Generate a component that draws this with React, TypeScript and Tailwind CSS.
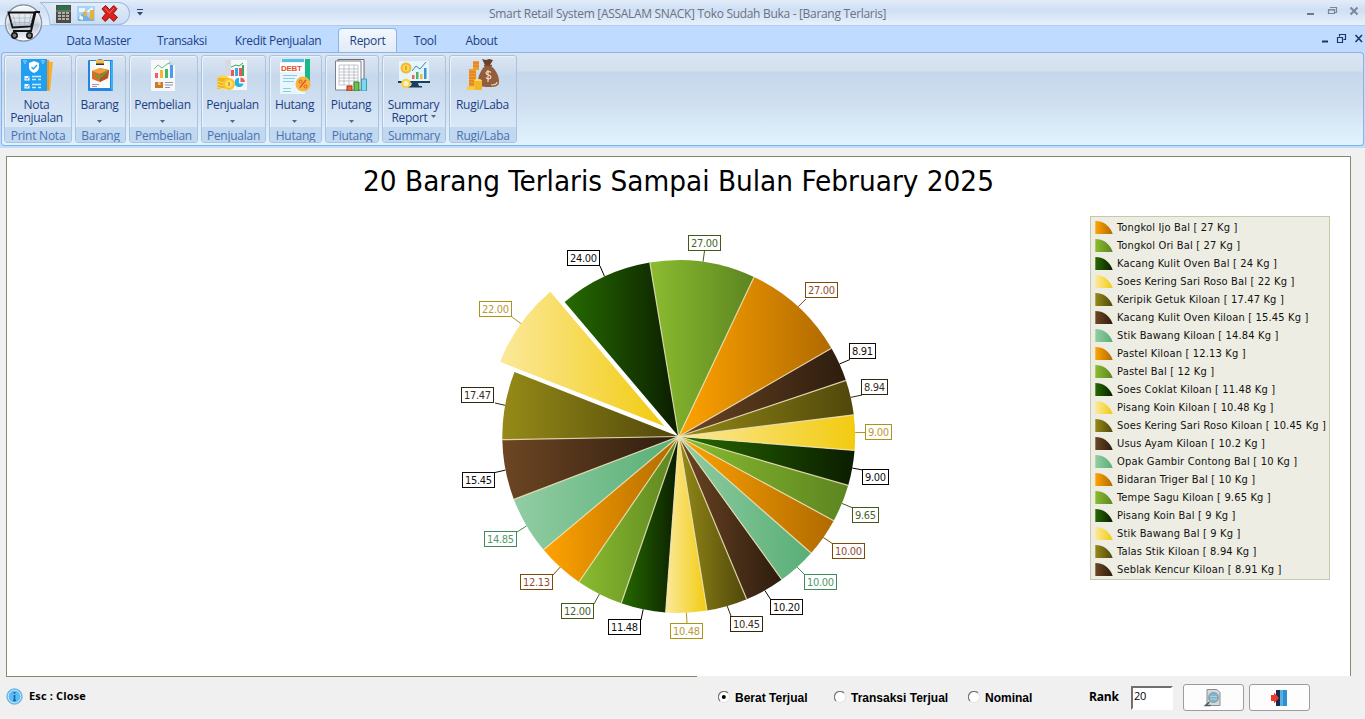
import React from "react";

type Hue = "orange" | "green" | "forest" | "yellow" | "olive" | "brown" | "mint";

const HUES: Record<Hue, { from: string; to: string; ink: string; frame: string }> = {
  orange: { from: "#ffa300", to: "#b06a00", ink: "#8f4f32", frame: "#7c4a0a" },
  green: { from: "#8bbc30", to: "#5c8520", ink: "#4a5f2c", frame: "#43591c" },
  forest: { from: "#266b00", to: "#0b1d00", ink: "#111111", frame: "#000000" },
  yellow: { from: "#fbe99a", to: "#f2cb10", ink: "#b99a3a", frame: "#ad9318" },
  olive: { from: "#958a17", to: "#50470b", ink: "#37301f", frame: "#2e290c" },
  brown: { from: "#6d4623", to: "#2d1c0e", ink: "#151010", frame: "#120b08" },
  mint: { from: "#92cda3", to: "#58ae76", ink: "#539a6a", frame: "#3f8a5d" },
};

interface Slice {
  name: string;
  value: number;
  kg: string;
  label: string;
  hue: Hue;
  box: [number, number];
  end: [number, number];
}

const SLICES: Slice[] = [
  { name: "Tongkol Ijo Bal", value: 27, kg: "27", label: "27.00", hue: "orange", box: [805, 282], end: [806, 299] },
  { name: "Tongkol Ori Bal", value: 27, kg: "27", label: "27.00", hue: "green", box: [688, 235], end: [704.5, 251] },
  { name: "Kacang Kulit Oven Bal", value: 24, kg: "24", label: "24.00", hue: "forest", box: [567, 250], end: [600, 266] },
  { name: "Soes Kering Sari Roso Bal", value: 22, kg: "22", label: "22.00", hue: "yellow", box: [479, 301], end: [512, 317] },
  { name: "Keripik Getuk Kiloan", value: 17.47, kg: "17.47", label: "17.47", hue: "olive", box: [461, 387], end: [495, 403] },
  { name: "Kacang Kulit Oven Kiloan", value: 15.45, kg: "15.45", label: "15.45", hue: "brown", box: [462, 472], end: [495, 472.5] },
  { name: "Stik Bawang Kiloan", value: 14.84, kg: "14.84", label: "14.85", hue: "mint", box: [484, 531], end: [517, 532] },
  { name: "Pastel Kiloan", value: 12.13, kg: "12.13", label: "12.13", hue: "orange", box: [520, 574], end: [553, 575] },
  { name: "Pastel Bal", value: 12, kg: "12", label: "12.00", hue: "green", box: [561, 603], end: [594, 604] },
  { name: "Soes Coklat Kiloan", value: 11.48, kg: "11.48", label: "11.48", hue: "forest", box: [608, 619], end: [641, 620] },
  { name: "Pisang Koin Kiloan", value: 10.48, kg: "10.48", label: "10.48", hue: "yellow", box: [670, 623], end: [687, 623] },
  { name: "Soes Kering Sari Roso Kiloan", value: 10.45, kg: "10.45", label: "10.45", hue: "olive", box: [730, 616], end: [731, 616] },
  { name: "Usus Ayam Kiloan", value: 10.2, kg: "10.2", label: "10.20", hue: "brown", box: [770, 599], end: [771, 600] },
  { name: "Opak Gambir Contong Bal", value: 10, kg: "10", label: "10.00", hue: "mint", box: [804, 574], end: [805, 575] },
  { name: "Bidaran Triger Bal", value: 10, kg: "10", label: "10.00", hue: "orange", box: [832, 543], end: [833, 544] },
  { name: "Tempe Sagu Kiloan", value: 9.65, kg: "9.65", label: "9.65", hue: "green", box: [852, 507], end: [853, 508] },
  { name: "Pisang Koin Bal", value: 9, kg: "9", label: "9.00", hue: "forest", box: [862, 469], end: [863, 470] },
  { name: "Stik Bawang Bal", value: 9, kg: "9", label: "9.00", hue: "yellow", box: [865, 424], end: [865, 432.5] },
  { name: "Talas Stik Kiloan", value: 8.94, kg: "8.94", label: "8.94", hue: "olive", box: [861, 379], end: [862, 395] },
  { name: "Seblak Kencur Kiloan", value: 8.91, kg: "8.91", label: "8.91", hue: "brown", box: [849, 343], end: [850, 359.5] },
];

const CX = 678.7;
const CY = 436.5;
const R = 176.4;
const EXPLODED = 3;
const OFF_X = 7;
const OFF_Y = 157;

function Pie() {
  const total = SLICES.reduce((s, d) => s + d.value, 0);
  let acc = 0;
  const parts = SLICES.map((d, i) => {
    const a0 = ((30 + (acc / total) * 360) * Math.PI) / 180;
    acc += d.value;
    const a1 = ((30 + (acc / total) * 360) * Math.PI) / 180;
    const mid = (a0 + a1) / 2;
    const shift = i === EXPLODED ? 17.6 : 0;
    const cx = CX + shift * Math.cos(mid);
    const cy = CY - shift * Math.sin(mid);
    const pt = (a: number) => `${(cx + R * Math.cos(a)).toFixed(2)} ${(cy - R * Math.sin(a)).toFixed(2)}`;
    return {
      ...d,
      path: `M${cx.toFixed(2)} ${cy.toFixed(2)}L${pt(a0)}A${R} ${R} 0 0 0 ${pt(a1)}Z`,
      edge: [cx + R * Math.cos(mid), cy - R * Math.sin(mid)],
      spoke: pt(a0),
      i,
    };
  });
  return (
    <svg className="block h-[519px] w-[1343px]" viewBox={`${OFF_X} ${OFF_Y} 1343 519`}>
      <defs>
        {(Object.keys(HUES) as Hue[]).map((h) => (
          <linearGradient key={h} id={`pie-${h}`} x1="0" x2="1" y1="0" y2="0">
            <stop offset="0" stopColor={HUES[h].from} />
            <stop offset="1" stopColor={HUES[h].to} />
          </linearGradient>
        ))}
      </defs>
      <text x="363" y="191" fontSize="28" textLength="631" lengthAdjust="spacingAndGlyphs" className="font-['DejaVu_Sans_Condensed','DejaVu_Sans',sans-serif]" fontStretch="condensed">
        20 Barang Terlaris Sampai Bulan February 2025
      </text>
      {parts.map((p) => (
        <path key={p.i} d={p.path} fill={`url(#pie-${p.hue})`} />
      ))}
      {parts
        .filter((p) => p.i !== EXPLODED && p.i !== EXPLODED + 1)
        .map((p) => (
          <path key={p.i} d={`M${CX} ${CY}L${p.spoke}`} stroke="#efe3ba" strokeOpacity="0.85" strokeWidth="1.2" />
        ))}
      {parts.map((p) => {
        const c = HUES[p.hue];
        const w = p.label.length > 4 ? 32 : 26;
        return (
          <g key={p.i}>
            <path d={`M${p.edge[0].toFixed(1)} ${p.edge[1].toFixed(1)}L${p.end[0]} ${p.end[1]}`} stroke={c.frame} strokeWidth="1" />
            <rect x={p.box[0] + 0.5} y={p.box[1] + 0.5} width={w} height="15" fill="#fff" stroke={c.frame} />
            <text x={p.box[0] + 3} y={p.box[1] + 12} fontSize="11" fill={c.ink} textLength={w - 5} className="font-['DejaVu_Sans_Condensed','DejaVu_Sans',sans-serif]" fontStretch="condensed">
              {p.label}
            </text>
          </g>
        );
      })}
    </svg>
  );
}

function Legend() {
  return (
    <div className="absolute top-[59px] left-[1083px] flex h-[364px] w-[240px] flex-col border border-[#c3c9ab] bg-[#edede3] pt-[2px] pl-[4px] font-['DejaVu_Sans_Condensed','DejaVu_Sans',sans-serif] text-[11px] tracking-[0.17px] [font-stretch:condensed] text-[#111]">
      {SLICES.map((s, i) => (
        <div key={i} className="flex h-[18px] items-start gap-[4px] leading-[17px] whitespace-pre">
          <svg className="mt-[2px] h-[13px] w-[18px] shrink-0" viewBox="0 0 18 13">
            <path d="M0.3 0C8 0 15 4.500 17.700 13H0.300Z" fill={`url(#pie-${s.hue})`} />
          </svg>
          <span>{`${s.name} [ ${s.kg} Kg ]`}</span>
        </div>
      ))}
    </div>
  );
}

const NotaIcon = () => (
  <svg className="h-8 w-8" viewBox="0 0 32 32">
    <path d="M24 2l8 1-3 29h-6z" fill="#f6b13c" />
    <path d="M25 1h3v30h-4z" fill="#e79a2d" />
    <rect x="0" y="0" width="26" height="32" fill="#219ff0" />
    <path d="M2 2h4M20 2h4M3 4h2M21 4h2" stroke="#a8dcff" strokeWidth="1" />
    <path d="M13 2l5 2v4c0 3-2 5-5 6-3-1-5-3-5-6V4z" fill="#fff" />
    <path d="M10.500 8l2 2 3.500-4" stroke="#219ff0" strokeWidth="1.300" fill="none" />
    <rect x="3.500" y="17" width="5" height="4.500" fill="#fff" />
    <rect x="3.500" y="25" width="5" height="4.500" fill="#fff" />
    <path d="M4.500 19l1.500 1.500 2.500-3.500M4.500 27l1.500 1.500 2.500-3.500" stroke="#4a9ed5" fill="none" />
    <path d="M11 17.500h9M11 20.500h4M17 20.500h3M11 25.500h9M11 28.500h4M17 28.500h3" stroke="#c9ebff" strokeWidth="1.400" />
  </svg>
);

const BarangIcon = () => (
  <svg className="h-8 w-8" viewBox="0 0 32 32">
    <rect x="4" y="1" width="25" height="31" rx="1" fill="#2485e0" />
    <path d="M27 2h2v29h-2z" fill="#36b5f4" />
    <rect x="6" y="2" width="20" height="27" fill="#fafafa" />
    <path d="M12 2c0-2 8-2 8 0v4h-8z" fill="#2b3344" />
    <rect x="12" y="1" width="8" height="3.500" fill="#f0bd47" />
    <path d="M8 12l8-3 9 2-1 8-8 4-8-3z" fill="#db6929" />
    <path d="M8 12l8-3 9 2-9 4z" fill="#f4a13b" />
    <path d="M16 15l9-4-1 8-8 4z" fill="#b4522a" />
    <path d="M11 15l4 4 8-7" stroke="#6aa03a" strokeWidth="1.800" fill="none" />
    <path d="M8 25.500h7M8 27.500h5" stroke="#bf8ab0" />
  </svg>
);

const PembelianIcon = () => (
  <svg className="h-8 w-8" viewBox="0 0 32 32">
    <path d="M4 1h18l6 5v26H4z" fill="#f8f8fa" />
    <path d="M22 1l6 5h-6z" fill="#d2d4dd" />
    <rect x="8" y="14" width="3" height="5" fill="#f25e5b" />
    <rect x="13" y="11" width="3" height="8" fill="#f7b538" />
    <rect x="18" y="10" width="3" height="9" fill="#42b969" />
    <rect x="23" y="6" width="3" height="13" fill="#4a9de8" />
    <path d="M7 10l4-4 4 3 5-4 3-1" stroke="#66bf8d" fill="none" />
    <rect x="8" y="23" width="8" height="6" fill="#cb7a2c" />
    <rect x="11" y="23" width="2.500" height="3" fill="#f2c37d" />
    <path d="M18 23.500h8M18 26h8M18 28.500h5" stroke="#8895ad" />
  </svg>
);

const PenjualanIcon = () => (
  <svg className="h-8 w-8" viewBox="0 0 32 32">
    <path d="M8 1h22v30H8z" fill="#f5f6f8" />
    <path d="M8 1h6v16H8z" fill="#d5d9e2" />
    <rect x="14" y="11" width="3" height="6" fill="#ee5553" />
    <rect x="18" y="9" width="3" height="8" fill="#3aa8e0" />
    <rect x="22" y="9" width="3" height="8" fill="#ee5553" />
    <rect x="25" y="6" width="2" height="11" fill="#3aa860" />
    <path d="M14 8l5-2 3 1 4-3" stroke="#3aa860" fill="none" />
    <path d="M22 19a4.500 4.500 0 1 0 4.500 5.500H22z" fill="#21b2e6" />
    <path d="M23.500 18.500a5 5 0 0 1 4.500 4.500h-4.500z" fill="#ed5956" />
    <ellipse cx="6" cy="19" rx="5.500" ry="2.500" fill="#ffd443" />
    <path d="M.5 19h11v11H.5z" fill="#efb41b" />
    <path d="M.5 22c3 2 8 2 11 0M.5 25c3 2 8 2 11 0M.5 28c3 2 8 2 11 0" stroke="#ffe07a" fill="none" />
    <circle cx="12" cy="25" r="6" fill="#f7c62b" />
    <circle cx="12" cy="25" r="3.800" fill="#ffe06b" />
    <path d="M12 23v4" stroke="#d0931b" strokeWidth="1.500" />
  </svg>
);

const HutangIcon = () => (
  <svg className="h-9 w-8" viewBox="0 0 32 36">
    <path d="M26 0h5v26h-5z" fill="#17b989" />
    <path d="M3 0h23v35H1V4z" fill="#e8f7fd" />
    <path d="M3 0h22v3H3z" fill="#5bbce2" />
    <path d="M1 4h25v9H1z" fill="#fff" />
    <text x="2" y="12" fontSize="8" fontWeight="700" fill="#e6502e" textLength="21" className="font-['Liberation_Sans',sans-serif]">DEBT</text>
    <path d="M4 16.500h14M4 19.500h12M4 22.500h11M4 29.500h8M4 32.500h8" stroke="#8dcbe4" strokeWidth="1.200" />
    <circle cx="24" cy="25" r="7.500" fill="#f7b53d" />
    <path d="M21 28.500l6-7.500" stroke="#e6532b" strokeWidth="1.400" />
    <circle cx="21.500" cy="22.500" r="1.500" stroke="#e6532b" fill="none" />
    <circle cx="26.500" cy="27.500" r="1.500" stroke="#e6532b" fill="none" />
  </svg>
);

const PiutangIcon = () => (
  <svg className="h-8 w-8" viewBox="0 0 32 32">
    <path d="M3 .5h26V30H3z" fill="#fafafa" stroke="#666c76" />
    <path d="M.5 2H26v29H.5z" fill="#fff" stroke="#7b808b" />
    <path d="M4 6h19v20H4zM4 10h19M4 13h19M4 16h19M4 19h19M4 22h19M9 6v20M14 6v20M19 6v20" stroke="#b4b6be" strokeWidth=".8" fill="none" />
    <path d="M12 27h5v5h-5z" fill="#e56835" stroke="#a73315" />
    <path d="M19 23h5v9h-5z" fill="#64c44f" stroke="#337d2c" />
    <path d="M26.500 20h5v12h-5z" fill="#7ed8ec" stroke="#3a9cb7" />
  </svg>
);

const SummaryIcon = () => (
  <svg className="h-8 w-8" viewBox="0 0 32 32">
    <rect x="1" y="2" width="30" height="20" fill="#e4f6fb" />
    <path d="M0 22h32v2H0z" fill="#173e5e" />
    <path d="M14 24h6l1 3h3v1.500H10V27h3z" fill="#173e5e" />
    <circle cx="8" cy="9" r="5.500" fill="#f6b72f" />
    <circle cx="8" cy="9" r="3.500" fill="#ffd75c" />
    <path d="M8 7v4" stroke="#d28b1d" strokeWidth="1.300" />
    <path d="M14 12l4-5 4 3 6-7" stroke="#3a86be" fill="none" />
    <rect x="14" y="16" width="2.500" height="4" fill="#ef6151" />
    <rect x="18" y="13" width="2.500" height="7" fill="#47b76b" />
    <rect x="22" y="15" width="2.500" height="5" fill="#f3b92f" />
    <rect x="26" y="9" width="2.500" height="11" fill="#3c91d0" />
    <circle cx="8" cy="24.500" r="4.800" fill="#fbd04c" />
    <circle cx="8" cy="24.500" r="2.600" fill="#fff3c4" />
  </svg>
);

const RugiIcon = () => (
  <svg className="h-8 w-8" viewBox="0 0 32 32">
    <path d="M6 2h6v9H6zM2 10h7v20H2z" fill="#f09c2b" />
    <path d="M6 4h6M6 7h6M2 13h7M2 16h7M2 19h7M2 22h7M2 25h7" stroke="#d9771c" />
    <path d="M15 0l4 1 3-1 4 1-3 5h-5z" fill="#67402b" />
    <path d="M18 7h6c5 4 8 10 8 16 0 4-3 5-10 5s-11-1-11-5c0-6 3-12 7-16z" fill="#935c3c" />
    <path d="M17 6.500h8" stroke="#7b4a2f" strokeWidth="1.500" />
    <path d="M21 11v12M24 13.500c-1-1.500-5-1.500-5 .5 0 2.500 5 1.500 5 4 0 2.500-4 2.500-5 .5" stroke="#f7e6ce" strokeWidth="1.100" fill="none" />
    <path d="M24 26c3 0 6-1 6-3" stroke="#f3d9c4" strokeWidth="1.200" fill="none" />
    <ellipse cx="11" cy="22" rx="4" ry="2" fill="#ffdf57" />
    <path d="M7 22h8v9H7z" fill="#f1b62c" />
    <path d="M0 27.500h8V31H0z" fill="#f9cd41" />
  </svg>
);

interface Group {
  width: string;
  nudge: string;
  Icon: () => React.ReactElement;
  lines: string[];
  arrow?: "below" | "inline";
  caption: string;
}

const GROUPS: Group[] = [
  { width: "w-[68px]", nudge: "pr-[3px]", Icon: NotaIcon, lines: ["Nota", "Penjualan"], caption: "Print Nota" },
  { width: "w-[51px]", nudge: "pr-[2px]", Icon: BarangIcon, lines: ["Barang"], arrow: "below", caption: "Barang" },
  { width: "w-[69px]", nudge: "pr-[2px]", Icon: PembelianIcon, lines: ["Pembelian"], arrow: "below", caption: "Pembelian" },
  { width: "w-[65px]", nudge: "pr-[2px]", Icon: PenjualanIcon, lines: ["Penjualan"], arrow: "below", caption: "Penjualan" },
  { width: "w-[53px]", nudge: "pr-[2px]", Icon: HutangIcon, lines: ["Hutang"], arrow: "below", caption: "Hutang" },
  { width: "w-[54px]", nudge: "pr-[2px]", Icon: PiutangIcon, lines: ["Piutang"], arrow: "below", caption: "Piutang" },
  { width: "w-[64px]", nudge: "pr-[1px]", Icon: SummaryIcon, lines: ["Summary", "Report"], arrow: "inline", caption: "Summary" },
  { width: "w-[68px]", nudge: "pr-[1px]", Icon: RugiIcon, lines: ["Rugi/Laba"], caption: "Rugi/Laba" },
];

const Arrow = ({ className }: { className: string }) => (
  <svg className={className} viewBox="0 0 5 3">
    <path d="M0 0h5L2.500 3z" fill="#4a6a96" />
  </svg>
);

function RibbonGroup({ g }: { g: Group }) {
  return (
    <div className={`${g.width} flex h-[88px] shrink-0 flex-col overflow-hidden rounded-[3px] border border-[#a9c3e0] bg-linear-to-b from-[#dce6f3] from-0% via-[#c7d8ec] via-25% to-[#dfedfb] shadow-[inset_1px_1px_0_#eaf2fb]`}>
      <div className={`${g.nudge} flex h-[71px] flex-col items-center pt-[3px]`}>
        <div className="flex h-[36px] items-start justify-center">
          <g.Icon />
        </div>
        <div className="mt-[3px] flex flex-col items-center text-[12px] leading-[13px] tracking-[-0.3px] whitespace-nowrap text-[#1c3f84]">
          {g.lines.map((l, i) => (
            <span key={l} className="flex items-center">
              {l}
              {g.arrow === "inline" && i === 1 && <Arrow className="mb-[3px] ml-[3px] h-[3px] w-[5px]" />}
            </span>
          ))}
        </div>
        {g.arrow === "below" && <Arrow className="mt-[9px] h-[3px] w-[5px]" />}
      </div>
      <div className="flex h-[15px] items-center justify-center bg-[#c1d8f1] pt-[2px] text-[12px] leading-[14px] tracking-[-0.25px] whitespace-nowrap text-[#4a72ad]">{g.caption}</div>
    </div>
  );
}

function AppButton() {
  return (
    <svg className="absolute top-[3px] left-[4px] h-[40px] w-[40px]" viewBox="0 0 40 40">
      <defs>
        <linearGradient id="orb" x1="0" x2="0" y1="0" y2="1">
          <stop offset="0" stopColor="#f7fafd" />
          <stop offset=".45" stopColor="#dce3ec" />
          <stop offset=".55" stopColor="#bcc7d6" />
          <stop offset="1" stopColor="#f4f9fe" />
        </linearGradient>
      </defs>
      <circle cx="19.500" cy="20" r="18" fill="url(#orb)" stroke="#8794a8" strokeWidth="1.500" />
      <circle cx="19.500" cy="20" r="16.800" fill="none" stroke="#fff" strokeOpacity=".7" />
      <path d="M36 9h-4.500l-4.500 19H9" fill="none" stroke="#111" strokeWidth="2" />
      <path d="M4.500 9.500h26l-3.500 14L8.500 24.500z" fill="none" stroke="#111" strokeWidth="1.800" />
      <path d="M9 12l3 11M15 11l1 12M21 11l-.5 12M27 11l-2.500 12M6 15h23M7 19.500h21" stroke="#a4abb5" strokeWidth=".6" />
      <circle cx="10.500" cy="32.500" r="2.700" fill="#777" stroke="#111" strokeWidth="1.500" />
      <circle cx="25.500" cy="32.500" r="2.700" fill="#777" stroke="#111" strokeWidth="1.500" />
    </svg>
  );
}

function TitleBar() {
  return (
    <div className="relative flex h-[26px] w-full items-start border-b border-[#b2cdea] bg-linear-to-b from-[#e3ecf9] from-0% via-[#cfdff4] via-40% to-[#e8f1fc]">
      <svg className="mt-[2px] ml-[40px] h-[23px] w-[12px] shrink-0" viewBox="0 0 12 23">
        <path d="M0 .5h12v22H10C9.500 12 6 4 0 .5z" fill="#d9e6f6" />
        <path d="M0 .5C6 4 9.500 12 10 22.500h2M0 .5h12" fill="none" stroke="#9fbbdd" />
      </svg>
      <div className="mt-[2px] flex h-[23px] w-[78px] items-center rounded-r-full border border-l-0 border-[#9fbbdd] bg-linear-to-b from-[#e3edf9] to-[#cbdcf2] pl-[4px]">
        <svg className="h-[18px] w-[15px] shrink-0" viewBox="0 0 15 18">
          <path d="M0 0h15v18H0z" fill="#4b4b48" />
          <path d="M1 1h13v4H1z" fill="#2e7045" />
          <path d="M2 8h3M6 8h3M10 8h3M2 11h3M6 11h3M10 11h3M2 14h3M6 14h3M10 14h3" stroke="#d8d4cc" strokeWidth="1.700" />
          <path d="M0 6h15" stroke="#89948a" />
        </svg>
        <svg className="ml-[6px] h-[17px] w-[18px] shrink-0" viewBox="0 0 18 17">
          <path d="M0 1h18v15H0z" fill="#a9d2f5" />
          <path d="M2 3h6v4H2zM9 7l6-5 2 5z" fill="#edf6fe" />
          <path d="M1 13l6-6 5 6 5-5v8H1z" fill="#73b1e6" />
          <path d="M7 6l3 1v5l-4-2zM13 5h4v9l-4 1z" fill="#e6b13e" />
          <path d="M3 10l3 2v3l-4-1z" fill="#f5f5ef" />
        </svg>
        <svg className="ml-[6px] h-[17px] w-[17px] shrink-0" viewBox="0 0 18 18">
          <path d="M1 4l4-3.500L9 5l4.500-4.500L17 4l-4 5 4.500 4-4 4.500L9 13l-4.500 4.500L1 14l4-5z" fill="#dd1f1d" stroke="#8d1212" />
          <path d="M4 3.500l5 5 4.500-5" stroke="#f77a70" fill="none" />
        </svg>
      </div>
      <svg className="mt-[9px] ml-[7px] h-[7px] w-[6px]" viewBox="0 0 6 7">
        <path d="M0 .5h6" stroke="#2f4a78" />
        <path d="M0 3h6L3 6.500z" fill="#2f4a78" />
      </svg>
      <div className="ml-[346px] w-[397px] text-[12px] leading-[27px] tracking-[-0.31px] whitespace-nowrap text-[#6b7280]">
        Smart Retail System [ASSALAM SNACK] Toko Sudah Buka - [Barang Terlaris]
      </div>
      <svg className="mt-[6px] mr-[6px] ml-auto h-[11px] w-[53px]" viewBox="0 0 53 11">
        <path d="M1 8h7" stroke="#6d7888" strokeWidth="2" />
        <path d="M24.500 1.500h6v5h-2M22.500 3.500h6v4h-6zM22.500 4h6M24 1.500h7" stroke="#7c8797" fill="none" strokeWidth="1.200" />
        <path d="M44.500 1.500l7 7M51.500 1.500l-7 7" stroke="#7c8797" strokeWidth="2" />
      </svg>
      <AppButton />
    </div>
  );
}

const TABS = [
  { label: "Data Master", width: "w-[91px]" },
  { label: "Transaksi", width: "w-[76px]" },
  { label: "Kredit Penjualan", width: "w-[116px]" },
  { label: "Report", width: "w-[59px]", active: true },
  { label: "Tool", width: "w-[56px]" },
  { label: "About", width: "w-[57px]" },
];

function TabRow() {
  return (
    <div className="flex h-[26px] items-end bg-[#bfdbff] pl-[53px] text-[12px] tracking-[-0.35px] whitespace-nowrap text-[#1b3f86]">
      {TABS.map((t) =>
        t.active ? (
          <div key={t.label} className={`${t.width} -mb-px ml-[2px] flex h-[25px] items-center justify-center rounded-t-[4px] border border-b-0 border-[#8db2e3] bg-linear-to-b from-[#f3f8fe] to-[#e1eaf6]`}>
            {t.label}
          </div>
        ) : (
          <div key={t.label} className={`${t.width} flex h-[24px] items-center justify-center pt-[2px]`}>
            {t.label}
          </div>
        ),
      )}
      <svg className="mr-[2px] mb-[8px] ml-auto h-[11px] w-[42px]" viewBox="0 0 42 11">
        <path d="M1 8.500h6" stroke="#17396e" strokeWidth="2" />
        <path d="M18.500 3.500v-2h6v5h-2M16.500 4.500h5v5h-5z" stroke="#17396e" strokeWidth="1.200" fill="none" />
        <path d="M34.500 2l6.500 7M41 2l-6.500 7" stroke="#17396e" strokeWidth="1.600" />
      </svg>
    </div>
  );
}

function Radio({ label, checked = false, className }: { label: string; checked?: boolean; className: string }) {
  return (
    <div className={`${className} flex items-center gap-[5px] whitespace-nowrap`}>
      <svg className="mb-[2px] h-[12px] w-[12px] shrink-0" viewBox="0 0 12 12">
        <circle cx="6" cy="6" r="5" fill="#fff" />
        <path d="M2 10A5.300 5.300 0 0 1 10 2" stroke="#777" strokeWidth="1.200" fill="none" />
        <path d="M10 2A5.300 5.300 0 0 1 2 10" stroke="#e4e4e4" strokeWidth="1" fill="none" />
        {checked && <circle cx="5.800" cy="6" r="2" fill="#000" />}
      </svg>
      <span>{label}</span>
    </div>
  );
}

function BottomBar() {
  return (
    <div className="flex h-[42px] items-start text-black">
      <svg className="mt-[11px] ml-[6px] h-[17px] w-[17px]" viewBox="0 0 17 17">
        <circle cx="8.500" cy="8.500" r="7.700" fill="#5bbcf3" stroke="#77aed4" />
        <circle cx="8.500" cy="8.500" r="6.300" fill="none" stroke="#c6eaff" />
        <path d="M8.500 4v1.800M8.500 7v5.500M7 12.500h3" stroke="#1a66ac" strokeWidth="1.700" />
      </svg>
      <div className="mt-[10px] ml-[6px] w-[60px] font-['Open_Sans','Noto_Sans',sans-serif] text-[11px] leading-[18px] font-bold tracking-[0.15px] whitespace-nowrap">Esc : Close</div>
      <div className="mt-[12px] ml-[629px] flex font-['Liberation_Sans',Arial,sans-serif] text-[12px] leading-[18px] font-bold">
        <Radio label="Berat Terjual" checked className="w-[116px]" />
        <Radio label="Transaksi Terjual" className="w-[134px]" />
        <Radio label="Nominal" className="w-[121px]" />
      </div>
      <div className="mt-[11px] w-[42px] font-['Open_Sans','Noto_Sans',sans-serif] text-[12px] leading-[18px] font-bold tracking-[-0.2px]">Rank</div>
      <div className="mt-[9px] h-[24px] w-[42px] border-2 border-t-[#6f6f6f] border-r-white border-b-white border-l-[#6f6f6f] bg-white pl-px font-['Open_Sans','Noto_Sans',sans-serif] text-[11px] leading-[16px] tracking-[-0.3px]">20</div>
      <button className="mt-[7px] ml-[10px] flex h-[27px] w-[61px] items-center justify-center rounded-[3px] border border-[#9c9ca0] bg-[#fdfdfd] pr-[2px]">
        <svg className="h-[18px] w-[18px]" viewBox="0 0 18 18">
          <path d="M3 .5h10l3 3v13H3z" fill="#d4d9db" stroke="#888e92" />
          <circle cx="9.500" cy="8.500" r="4.800" fill="#7fb7cd" stroke="#8b9aa3" strokeWidth="1.200" />
          <path d="M6 7.500h7M6 10h7" stroke="#a9d2e0" />
          <path d="M5.500 13l-4 3.500h5" stroke="#555b60" strokeWidth="1.600" fill="none" />
        </svg>
      </button>
      <button className="mt-[7px] ml-[5px] flex h-[27px] w-[61px] items-center justify-center rounded-[3px] border border-[#9c9ca0] bg-[#fdfdfd] pr-px">
        <svg className="h-[16px] w-[18px]" viewBox="0 0 18 16">
          <path d="M6 0h5v16H6z" fill="#112d50" />
          <path d="M10 0h7v16h-7z" fill="#2f8fd0" />
          <path d="M10 0h3v16h-3z" fill="#57afe2" />
          <path d="M1 5h3V2.500l5 5.500-5 5.500V11H1z" fill="#e9382c" />
        </svg>
      </button>
    </div>
  );
}

export default function App() {
  return (
    <div className="flex h-[719px] w-[1365px] flex-col overflow-hidden bg-[#f0f0f0] font-['Open_Sans','Noto_Sans',sans-serif]">
      <TitleBar />
      <TabRow />
      <div className="flex h-[96px] flex-col bg-[#bfdbff] pb-[2px]">
        <div className="mx-px flex h-[94px] items-start gap-[3px] rounded-[4px] border border-[#8db2e3] border-b-[#80b4d8] bg-[linear-gradient(to_bottom,#dbe5f2_0,#d4e0ef_18px,#c5d7eb_19px,#cfdff0_50px,#e2f3ff_92px)] pt-[2px] pl-[2px]">
          {GROUPS.map((g) => (
            <RibbonGroup key={g.caption + g.width} g={g} />
          ))}
        </div>
      </div>
      <div className="mt-[8px] ml-[6px] flex h-[521px] w-[1345px] flex-col">
        <div className="relative h-[520px] border border-b-0 border-[#858a6c] bg-white">
          <Pie />
          <Legend />
        </div>
        <div className="h-px w-[691px] bg-[#858a6c]" />
      </div>
      <BottomBar />
    </div>
  );
}
